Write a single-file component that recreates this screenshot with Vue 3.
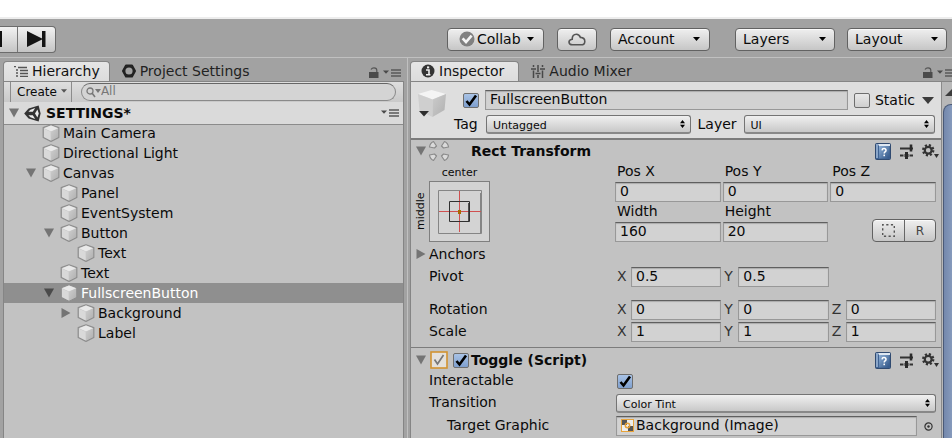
<script setup>
import { ref } from 'vue'

const tree = [
  { name: 'Main Camera', depth: 0 },
  { name: 'Directional Light', depth: 0 },
  { name: 'Canvas', depth: 0, fold: 'open' },
  { name: 'Panel', depth: 1 },
  { name: 'EventSystem', depth: 1 },
  { name: 'Button', depth: 1, fold: 'open' },
  { name: 'Text', depth: 2 },
  { name: 'Text', depth: 1 },
  { name: 'FullscreenButton', depth: 1, fold: 'open' },
  { name: 'Background', depth: 2, fold: 'closed' },
  { name: 'Label', depth: 2 },
]
const selected = ref(8)

const rect = ref([
  { id: 'pos-x', label: 'Pos X', value: '0' },
  { id: 'pos-y', label: 'Pos Y', value: '0' },
  { id: 'pos-z', label: 'Pos Z', value: '0' },
  { id: 'width', label: 'Width', value: '160' },
  { id: 'height', label: 'Height', value: '20' },
])
const vectors = ref([
  { name: 'Pivot', axes: [['X', '0.5'], ['Y', '0.5']] },
  { name: 'Rotation', axes: [['X', '0'], ['Y', '0'], ['Z', '0']] },
  { name: 'Scale', axes: [['X', '1'], ['Y', '1'], ['Z', '1']] },
])
const objectName = ref('FullscreenButton')
const active = ref(true)
const isStatic = ref(false)
const enabled = ref(true)
const interactable = ref(true)
</script>

<template>
  <div class="editor">
    <svg class="defs" width="0" height="0" aria-hidden="true">
      <defs>
        <linearGradient id="cubeFront" x1="0" y1="0" x2="1" y2="1">
          <stop offset="0" stop-color="#cccccc" /><stop offset="1" stop-color="#b0b0b0" />
        </linearGradient>
        <linearGradient id="bookFill" x1="0" y1="0" x2="1" y2="1">
          <stop offset="0" stop-color="#8fb0d6" /><stop offset="1" stop-color="#2f5486" />
        </linearGradient>
      </defs>
      <symbol id="cube" viewBox="0 0 18 18">
        <path d="M9 .8 16.8 3.6V13.4L9 17.4 1.2 13.4V3.6Z" fill="#c4c4c4" stroke="#8e8e8e" stroke-width="1.2" stroke-linejoin="round" />
        <path d="M9 1.6 16 4.2 9 7.4 2 4.2Z" fill="#e9e9e9" />
        <path d="M2 4.8 8.7 7.8V16.4L2 13Z" fill="#d9d9d9" />
        <path d="M9.3 7.8 16 4.8V13L9.3 16.4Z" fill="url(#cubeFront)" />
      </symbol>
      <symbol id="down" viewBox="0 0 10 10"><path d="M0 .5H10L5 9.5Z" /></symbol>
      <symbol id="right" viewBox="0 0 10 10"><path d="M.5 0V10L9.5 5Z" /></symbol>
      <symbol id="caret" viewBox="0 0 7 4"><path d="M0 0H7L3.5 4Z" /></symbol>
      <symbol id="updown" viewBox="0 0 5 8"><path d="M2.5 0 5 3.3H0ZM0 4.7H5L2.5 8Z" /></symbol>
      <symbol id="lock" viewBox="0 0 10 11">
        <path d="M2 2.5Q3 .8 5 .8 7.8.8 7.8 3.2V6" fill="none" stroke="#555" stroke-width="1.2" />
        <rect x="0" y="5" width="9.5" height="6" fill="#4b4b4b" />
      </symbol>
      <symbol id="menu" viewBox="0 0 18 8">
        <path d="M0 1.5H6L3 4.8Z" fill="#4a4a4a" />
        <path d="M8 1H18M8 4H18M8 7H18" stroke="#5a5a5a" stroke-width="1.3" />
      </symbol>
      <symbol id="book" viewBox="0 0 16 17">
        <rect x=".5" y=".5" width="15" height="16" rx="1" fill="#3f6292" stroke="#304a70" />
        <path d="M3 1H15V3H4Z" fill="#dfe8f2" />
        <path d="M1 1H3V15H1Z" fill="#8aa6c9" />
        <rect x="4" y="3" width="10.5" height="12.5" fill="url(#bookFill)" />
        <path d="M7 7.4Q7.2 5.6 9 5.6 11 5.6 11 7.4 11 8.4 9.9 9 9.2 9.4 9.2 10.6" fill="none" stroke="#fff" stroke-width="1.5" />
        <rect x="8.4" y="11.6" width="1.6" height="1.6" fill="#fff" />
      </symbol>
      <symbol id="preset" viewBox="0 0 13 15">
        <path d="M0 4.5H13M0 11.5H3.5M9.5 11.5H13" stroke="#333" stroke-width="2" />
        <path d="M11 .5V7.5" stroke="#2a2a2a" stroke-width="2.6" />
        <path d="M6.5 8V15" stroke="#2a2a2a" stroke-width="3" />
        <path d="M4.5 11.5H8.5" stroke="#2a2a2a" stroke-width="3" />
      </symbol>
      <symbol id="gear" viewBox="0 0 17 15">
        <circle cx="6.2" cy="6.2" r="5" fill="none" stroke="#333" stroke-width="2.4" stroke-dasharray="2.1 1.83" />
        <circle cx="6.2" cy="6.2" r="3.4" fill="none" stroke="#333" stroke-width="2.2" />
        <path d="M12 10H17L14.5 14Z" fill="#303030" />
      </symbol>
    </svg>

    <div class="cap"></div>
    <header class="toolbar">
      <div class="playback">
        <button type="button" class="pause" aria-label="Pause">
          <svg width="3" height="16" viewBox="0 0 3 16"><rect width="2" height="16" fill="#111" /></svg>
        </button>
        <button type="button" class="step" aria-label="Step">
          <svg width="19" height="16" viewBox="0 0 19 16"><path d="M0 0 15 7.4V0H18.5V16H15V8.6L0 16Z" fill="#151515" /></svg>
        </button>
      </div>
      <div class="services">
        <button type="button" class="tool collab">
          <svg width="16" height="16" viewBox="0 0 16 16"><circle cx="8" cy="8" r="7.5" fill="#808080" /><path d="M3.6 7.4 7 11 12.6 4.6" fill="none" stroke="#f4f4f4" stroke-width="2.6" /></svg>
          <span>Collab</span>
          <svg class="caret" width="7" height="4"><use href="#caret" /></svg>
        </button>
        <button type="button" class="tool cloud" aria-label="Cloud services">
          <svg width="18" height="13" viewBox="0 0 18 13"><path d="M4.5 11.8Q1 11.8 1 9 1 6.6 4.2 6.2 4.2 1.2 8.4 1.2 11.2 1.2 12.4 4.4 16.8 4.6 16.8 8.4 16.8 11.8 13 11.8Z" fill="none" stroke="#555" stroke-width="1.6" /></svg>
        </button>
        <button type="button" class="tool account">
          <span>Account</span>
          <svg class="caret" width="7" height="4"><use href="#caret" /></svg>
        </button>
      </div>
      <div class="views">
        <div class="pick">
          <select class="tool" aria-label="Layers"><option>Layers</option></select>
          <svg class="caret" width="7" height="4"><use href="#caret" /></svg>
        </div>
        <div class="pick">
          <select class="tool" aria-label="Layout"><option>Layout</option></select>
          <svg class="caret" width="7" height="4"><use href="#caret" /></svg>
        </div>
      </div>
    </header>

    <main class="docks">
      <section class="dock hierarchy">
        <div class="tabs">
          <button type="button" class="tab on">
            <svg width="14" height="11" viewBox="0 0 14 11"><path d="M0 .5H2M4 1.5H13M2 4H4M6 4.5H14M2 7H4M6 7.5H14M2 10H4M6 10.5H14" stroke="#555" stroke-width="1.3" /></svg>
            Hierarchy
          </button>
          <button type="button" class="tab second">
            <svg width="14" height="14" viewBox="0 0 14 14"><path d="M4 1.5H10L13 7 10 12.5H4L1 7Z" fill="none" stroke="#222" stroke-width="2" stroke-linejoin="round" /><circle cx="7" cy="7" r="4.6" fill="none" stroke="#222" stroke-width="2" /></svg>
            Project Settings
          </button>
          <div class="tab-tools">
            <svg width="10" height="11"><use href="#lock" /></svg>
            <svg width="18" height="8"><use href="#menu" /></svg>
          </div>
        </div>
        <div class="panel">
          <div class="finder">
            <button type="button" class="create">Create <svg width="6" height="4"><use href="#caret" /></svg></button>
            <label class="search">
              <svg width="15" height="11" viewBox="0 0 15 11"><circle cx="4" cy="4" r="3" fill="none" stroke="#777" stroke-width="1.3" /><path d="M6 6 9 10" stroke="#777" stroke-width="1.5" /><path d="M9 2H15L12 6Z" fill="#777" /></svg>
              <input type="text" placeholder="All" aria-label="Search hierarchy" />
            </label>
          </div>
          <div class="scene">
            <svg class="fold" width="10" height="10"><use href="#down" /></svg>
            <svg width="17" height="17" viewBox="0 0 17 17"><path d="M.2 8.5 4.6 3.6 14.6.4 16.6 8.5 14.6 16.6 4.6 13.4Z" fill="#333" /><path d="M4.4 6.8 6.4 4.7 11.2 3 8.8 6.8ZM4.4 10.2 6.4 12.3 11.2 14 8.8 10.2ZM11 8.5 13.4 4.4 14.8 8.5 13.4 12.6Z" fill="#ececec" /></svg>
            <strong>SETTINGS*</strong>
            <svg class="scene-menu" width="18" height="8"><use href="#menu" /></svg>
          </div>
          <ul class="tree">
            <li v-for="(node, i) in tree" :key="i" :class="['node', 'depth-' + node.depth, { selected: i === selected }]" @click="selected = i">
              <span class="fold-slot">
                <svg v-if="node.fold" class="fold" width="10" height="10"><use :href="node.fold === 'open' ? '#down' : '#right'" /></svg>
              </span>
              <svg width="18" height="18"><use href="#cube" /></svg>
              <span>{{ node.name }}</span>
            </li>
          </ul>
        </div>
      </section>

      <section class="dock inspector">
        <div class="tabs">
          <button type="button" class="tab on">
            <svg width="14" height="14" viewBox="0 0 14 14"><circle cx="7" cy="7" r="6.5" fill="#333" /><path d="M5 6H8V10.5M5 10.8H9.4" fill="none" stroke="#eee" stroke-width="1.6" /><rect x="6" y="2.4" width="2.2" height="2" fill="#eee" /></svg>
            Inspector
          </button>
          <button type="button" class="tab second">
            <svg width="14" height="13" viewBox="0 0 14 13"><path d="M2.5 0V2M2.5 5.5V13M7 0V7M7 10V13M11.5 0V2M11.5 5.5V13M0 4H5M4.5 8.5H9.5M9 4H14" stroke="#484848" stroke-width="1.5" /></svg>
            Audio Mixer
          </button>
          <div class="tab-tools">
            <svg width="10" height="11"><use href="#lock" /></svg>
            <svg width="18" height="8"><use href="#menu" /></svg>
          </div>
        </div>
        <div class="panel split">
          <div class="body">
            <div class="object">
              <svg class="big-cube" width="30" height="28" viewBox="0 0 30 28"><path d="M1 4 14.5 0 29 4 15.5 9.5Z" fill="#f4f4f4" /><path d="M1 4 15.5 9.5V27L2.5 20.5Z" fill="#cfcfcf" /><path d="M29 4 15.5 9.5V27L27.5 20Z" fill="url(#cubeFront)" /><path d="M2 21H12L7 26.5Z" fill="#2e2e2e" /></svg>
              <div class="object-rows">
                <div class="line">
                  <input v-model="active" class="check" type="checkbox" aria-label="Active" />
                  <input v-model="objectName" class="field name" type="text" aria-label="Name" />
                  <label class="static"><input v-model="isStatic" class="check" type="checkbox" />Static</label>
                  <svg class="static-arrow" width="12" height="7" viewBox="0 0 12 7"><path d="M0 0H12L6 7Z" fill="#3c3c3c" /></svg>
                </div>
                <div class="line second-line">
                  <label class="tag-label" for="tag">Tag</label>
                  <div class="pick small tag-pick">
                    <select id="tag"><option>Untagged</option></select>
                    <svg class="caret" width="5" height="8"><use href="#updown" /></svg>
                  </div>
                  <label class="layer-label" for="layer">Layer</label>
                  <div class="pick small layer-pick">
                    <select id="layer"><option>UI</option></select>
                    <svg class="caret" width="5" height="8"><use href="#updown" /></svg>
                  </div>
                </div>
              </div>
            </div>

            <section class="component">
              <div class="title">
                <svg class="fold" width="10" height="10"><use href="#down" /></svg>
                <svg class="rect-icon" width="22" height="22" viewBox="0 0 22 22"><g fill="#dadada" stroke="#8a8a8a" stroke-width="1.2" stroke-linejoin="round"><path d="M5.5 1.5 8.5 6 6.5 8 1.5 7Q2 3 5.5 1.5Z" /><path d="M16.5 1.5 13.5 6 15.5 8 20.5 7Q20 3 16.5 1.5Z" /><path d="M5.5 20.5 8.5 16 6.5 14 1.5 15Q2 19 5.5 20.5Z" /><path d="M16.5 20.5 13.5 16 15.5 14 20.5 15Q20 19 16.5 20.5Z" /></g></svg>
                <strong class="rect-title">Rect Transform</strong>
                <div class="actions">
                  <svg width="16" height="17"><use href="#book" /></svg>
                  <svg width="13" height="15"><use href="#preset" /></svg>
                  <svg width="17" height="15"><use href="#gear" /></svg>
                </div>
              </div>
              <div class="rect">
                <div class="anchor">
                  <span class="anchor-h">center</span>
                  <span class="anchor-v">middle</span>
                  <button type="button" class="anchor-box" aria-label="Anchor presets">
                    <svg width="59" height="59" viewBox="0 0 59 59"><path d="M8.5 8.5H51.5V51.5H8.5Z" fill="none" stroke="#858585" /><path d="M51 11V51" stroke="#858585" stroke-width="2" /><path d="M29.5 9V50M9 29.5H51" stroke="#d05050" /><path d="M19.5 19.5H39.5V39.5H19.5Z" fill="none" stroke="#303030" /><path d="M39 21V39" stroke="#303030" stroke-width="1.6" /><rect x="28" y="28" width="3" height="4" fill="#a86a00" /></svg>
                  </button>
                </div>
                <div class="triple">
                  <div v-for="f in rect" :key="f.id" class="stacked">
                    <label :for="f.id">{{ f.label }}</label>
                    <input :id="f.id" v-model="f.value" class="field" type="text" />
                  </div>
                  <div class="modes">
                    <button type="button" aria-label="Blueprint mode"><svg width="13" height="13" viewBox="0 0 13 13"><rect x=".7" y=".7" width="11.6" height="11.6" fill="none" stroke="#555" stroke-width="1.4" stroke-dasharray="2.2 2.44" stroke-dashoffset="1.1" /></svg></button>
                    <button type="button">R</button>
                  </div>
                </div>
              </div>
              <div class="anchors-row">
                <svg class="fold" width="10" height="10"><use href="#right" /></svg>
                <span>Anchors</span>
              </div>
              <div class="vectors">
                <div v-for="v in vectors" :key="v.name" :class="['prop', v.name.toLowerCase()]">
                  <span class="caption">{{ v.name }}</span>
                  <div class="triple">
                    <label v-for="a in v.axes" :key="a[0]" class="axis"><span>{{ a[0] }}</span><input v-model="a[1]" class="field" type="text" /></label>
                  </div>
                </div>
              </div>
            </section>

            <section class="component">
              <div class="title toggle-title">
                <svg class="fold" width="10" height="10"><use href="#down" /></svg>
                <svg class="script-icon" width="18" height="18" viewBox="0 0 18 18"><rect x="1" y="1" width="16" height="16" fill="#e4e1dc" stroke="#d29330" stroke-width="1.6" /><path d="M4.5 8.5 7.5 13 13.5 4" fill="none" stroke="#777" stroke-width="1.7" /></svg>
                <label class="component-check"><input v-model="enabled" class="check" type="checkbox" /><strong>Toggle (Script)</strong></label>
                <div class="actions">
                  <svg width="16" height="17"><use href="#book" /></svg>
                  <svg width="13" height="15"><use href="#preset" /></svg>
                  <svg width="17" height="15"><use href="#gear" /></svg>
                </div>
              </div>
              <div class="prop">
                <label class="caption" for="interactable">Interactable</label>
                <div class="tick"><input id="interactable" v-model="interactable" class="check" type="checkbox" /></div>
              </div>
              <div class="prop">
                <label class="caption" for="transition">Transition</label>
                <div class="pick small">
                  <select id="transition"><option>Color Tint</option></select>
                  <svg class="caret" width="5" height="8"><use href="#updown" /></svg>
                </div>
              </div>
              <div class="prop graphic">
                <span class="caption nested">Target Graphic</span>
                <div class="object-field">
                  <button type="button" class="field reference">
                    <svg width="13" height="13" viewBox="0 0 13 13"><rect x=".5" y=".5" width="12" height="12" fill="#eee" stroke="#e8a33a" /><path d="M1 1H6V6H1ZM7 7H12V12H7Z" fill="#555" /><circle cx="6.5" cy="6.5" r="2.2" fill="none" stroke="#e8a33a" stroke-width="1.5" /></svg>
                    Background (Image)
                  </button>
                  <button type="button" class="picker" aria-label="Select object"><svg width="9" height="9" viewBox="0 0 9 9"><circle cx="4.5" cy="4.5" r="3.6" fill="none" stroke="#333" stroke-width="1.2" /><circle cx="4.5" cy="4.5" r="1.2" fill="#333" /></svg></button>
                </div>
              </div>
            </section>
          </div>
          <div class="scroll" aria-hidden="true">
            <svg width="14" height="7" viewBox="0 0 14 7"><path d="M7 0 14 7H0Z" fill="#3c3c3c" /></svg>
            <div class="thumb"></div>
          </div>
        </div>
      </section>
    </main>
  </div>
</template>

<style>
body { background: #a2a2a2; }
</style>

<style scoped>
* { box-sizing: border-box; }
.editor {
  display: flex; flex-direction: column; height: 100vh; overflow: hidden;
  background: #a2a2a2; color: #0a0a0a;
  font: 14px/20px "DejaVu Sans", Verdana, sans-serif;
}
.defs { position: absolute; }
svg { flex: none; display: block; }
button, input, select { font: inherit; color: inherit; margin: 0; padding: 0; border: 0; background: none; }
strong { font-weight: 700; }
.cap { flex: none; height: 19px; background: #fff; border-bottom: 2px solid #ededed; }

.toolbar { flex: none; display: flex; align-items: center; height: 38px; padding: 2px 5px 0 0; }
.playback { display: flex; border: 1px solid #6c6c6c; border-left: 0; border-radius: 0 4px 4px 0; height: 27px; background: linear-gradient(#f2f2f2, #c4c4c4); }
.playback button { display: flex; align-items: center; }
.pause { width: 17px; }
.step { width: 38px; justify-content: center; border-left: 1px solid #777; }
.services { display: flex; gap: 13px; margin-left: auto; }
.views { display: flex; gap: 12px; margin-left: 25px; }
.tool, .modes {
  border: 1px solid #626262; border-radius: 4px; box-shadow: inset 0 1px #fafafa;
  background: linear-gradient(#efefef, #c6c6c6);
}
.tool { display: flex; align-items: center; height: 23px; padding: 0 9px 0 7px; }
.collab { width: 97px; padding-left: 11px; gap: 2px; }
.cloud { width: 40px; justify-content: center; padding: 0; }
.account { width: 100px; }
.tool .caret { margin-left: auto; }
.views .pick { width: 100px; }
.pick { display: grid; align-items: center; }
.pick > * { grid-area: 1 / 1; }
.pick select { appearance: none; width: 100%; }
.pick .caret { justify-self: end; margin-right: 9px; pointer-events: none; }
.small select {
  height: 19px; padding: 2px 7px 0 6px; font-size: 11px; line-height: 16px; border: 1px solid #747474; border-radius: 3px;
  border-bottom-width: 2px; border-bottom-color: #888; background: linear-gradient(#f0f0f0, #c8c8c8);
}
.small .caret { margin-right: 6px; }

.docks { flex: 1; min-height: 0; display: grid; grid-template-columns: minmax(0, 3fr) minmax(0, 4fr); border-top: 1px solid #c0c0c0; }
.dock { display: flex; flex-direction: column; min-width: 0; min-height: 0; }
.hierarchy { padding: 0 3px 0 3px; border-right: 1px solid #c0c0c0; }
.inspector { padding-left: 2px; }
.tabs { flex: none; display: flex; align-items: flex-end; height: 23px; }
.tab { display: flex; align-items: center; gap: 4px; height: 20px; padding-bottom: 1px; white-space: nowrap; color: #222; border: 1px solid transparent; border-bottom: 0; }
.tab.on { padding: 0 9px 1px 10px; color: #111; background: linear-gradient(#e6e6e6, #dcdcdc); border-color: #858585; border-radius: 4px 4px 0 0; }
.inspector .tab.on { padding-right: 14px; }
.tab.second { margin-left: 11px; }
.tab-tools { display: flex; align-items: center; gap: 4px; height: 17px; margin-left: auto; padding-right: 3px; }
.inspector .tab-tools { padding: 0; margin-right: -3px; }
.panel { flex: 1; min-height: 0; overflow: hidden; background: #c2c2c2; border: 1px solid #858585; border-bottom: 0; }
.finder { display: flex; align-items: center; height: 20px; padding-left: 6px; background: linear-gradient(#dedede, #c9c9c9); }
.create { display: flex; gap: 4px; height: 20px; padding: 0 4px 0 6px; font-size: 12px; line-height: 20px; border: solid #8c8c8c; border-width: 0 1px; white-space: nowrap; }
.create svg { margin-top: 7px; fill: #555; }
.search { flex: 1; display: flex; align-items: center; height: 18px; margin: 0 7px 0 9px; padding-left: 4px; border: 1px solid #8a8a8a; border-top-color: #666; border-radius: 9px; background: #d4d4d4; }
.search input { flex: 1; min-width: 0; font-size: 12px; height: 16px; padding-bottom: 2px; line-height: 14px; }
.search input::placeholder { color: #777; opacity: 1; }
.scene { display: flex; align-items: center; gap: 5px; height: 23px; padding: 0 4px 0 5px; background: #dadada; border-bottom: 1px solid #8b8b8b; }
.scene-menu { margin-left: auto; }
.fold { fill: #747474; }
.tree { list-style: none; margin: -2px 0 0; padding: 0; }
.node { display: flex; align-items: center; gap: 3px; height: 20px; }
.fold-slot { flex: none; width: 13px; }
.depth-0 { padding-left: 22px; }
.depth-1 { padding-left: 40px; }
.depth-2 { padding-left: 57px; }
.selected { background: #8f8f8f; color: #fff; }
.selected .fold { fill: #4a4a4a; }

.split { display: flex; border-right: 0; }
.body { flex: 1; min-width: 0; }
.scroll { flex: none; width: 11px; display: flex; flex-direction: column; border-left: 1px solid #8a8a8a; background: #b8b8b8; overflow: hidden; }
.scroll svg { margin: 7px 0 8px 3px; }
.thumb { flex: 1; width: 16px; margin-left: 1px; border: 1px solid #4a5a78; border-bottom: 0; border-radius: 8px 8px 0 0; background: linear-gradient(90deg, #7488ac, #94a8c8); }
.object { display: flex; gap: 6px; height: 58px; padding: 8px 6px 0 6px; background: #dedede; border-bottom: 2px solid #7c7c7c; }
.object-rows { flex: 1; min-width: 0; }
.line { display: flex; align-items: center; height: 20px; padding-left: 10px; }
.name { flex: 1; margin: 0 6px; }
.static { display: flex; align-items: center; gap: 5px; }
.static-arrow { margin: 0 1px 0 7px; }
.second-line { margin-top: 4px; padding-left: 1px; }
.tag-label { width: 32px; }
.tag-pick { flex: 204; }
.layer-label { width: 46px; margin-left: 7px; }
.layer-pick { flex: 191; }
.check { appearance: none; flex: none; display: block; width: 16px; height: 15px; border: 1px solid #6e6e6e; border-radius: 2px; background: linear-gradient(#e8e8e8, #cfcfcf); }
.check:checked { background: url("data:image/svg+xml,%3Csvg xmlns='http://www.w3.org/2000/svg' viewBox='0 0 14 13'%3E%3Cpath d='M2.5 7 5.5 10.5 12 1.5' fill='none' stroke='%23000' stroke-width='2.6'/%3E%3C/svg%3E") center / 14px 13px no-repeat, linear-gradient(#a9c3e6, #7e9fce); }
.field { min-width: 0; height: 20px; padding: 0 4px 2px; line-height: 16px; border: 1px solid #989898; border-top-color: #5f5f5f; background: #d2d2d2; box-shadow: inset 0 1px 1px #aaa; }

.component { padding: 0 5px 0 18px; }
.component + .component { border-top: 1px solid #7c7c7c; }
.title { display: flex; align-items: center; height: 22px; margin: 0 -3px 0 -13px; }
.rect-icon { margin-left: 2px; }
.rect-title { margin-left: 21px; }
.actions { display: flex; align-items: center; gap: 9px; margin-left: auto; }
.rect { display: grid; grid-template-columns: 186px minmax(0, 1fr); }
.triple { display: grid; grid-template-columns: repeat(3, minmax(0, 1fr)); column-gap: 2px; }
.stacked { display: flex; flex-direction: column; }
.stacked label { height: 20px; padding-left: 2px; line-height: 18px; }
.modes { display: grid; grid-template-columns: 1fr 1fr; align-self: end; justify-self: end; width: 64px; height: 23px; font-size: 12px; }
.modes button { display: grid; place-items: center; color: #444; }
.modes button + button { border-left: 1px solid #666; }
.anchor { display: grid; grid-template: 19px 61px / 16px 61px; margin-left: -16px; font-size: 11px; line-height: 22px; }
.anchor-h { grid-column: 2; text-align: center; }
.anchor-v { grid-row: 2; grid-column: 1; writing-mode: vertical-rl; transform: rotate(180deg); text-align: center; line-height: 16px; }
.anchor-box { grid-row: 2; grid-column: 2; border: 1px solid #7f7f7f; background: #d3d3d3; }
.anchors-row { display: flex; align-items: center; gap: 3px; height: 24px; margin-left: -13px; padding-bottom: 1px; }
.prop { display: grid; grid-template-columns: 187px minmax(0, 1fr); align-items: center; height: 22px; }
.caption { padding-bottom: 2px; }
.pivot { margin-bottom: 11px; }
.vectors { padding-bottom: 4px; }
.axis { display: flex; line-height: 18px; }
.axis span { flex: none; width: 15px; padding-left: 1px; color: #333; }
.axis .field { flex: 1; }
.toggle-title { padding-top: 2px; }
.toggle-title .script-icon { margin-left: 4px; }
.component-check { display: flex; align-items: center; gap: 2px; margin-left: 5px; }
.tick { padding-left: 1px; }
.nested { padding-left: 18px; }
.graphic { height: 24px; }
.object-field { display: flex; }
.reference { flex: 1; display: flex; align-items: center; gap: 2px; white-space: nowrap; }
.picker { display: grid; place-items: center; width: 22px; flex: none; margin-right: -3px; }
</style>
